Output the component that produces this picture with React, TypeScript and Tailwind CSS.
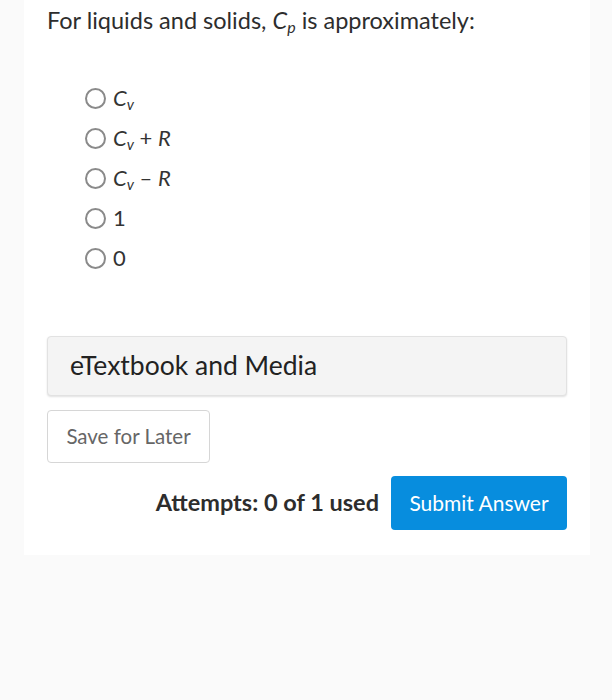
import React from 'react';

const options: React.ReactNode[] = [
  <><i>C</i><sub className="text-[15px] italic">v</sub></>,
  <><i>C</i><sub className="text-[15px] italic">v</sub> + <i>R</i></>,
  <><i>C</i><sub className="text-[15px] italic">v</sub> – <i>R</i></>,
  <>1</>,
  <>0</>,
];

export default function App() {
  return (
    <div className="min-h-[700px] bg-[#fafafa] font-['Lato','Liberation_Sans',sans-serif] text-[#2d2d2d]">
      <div className="mx-[24px] w-[566px] bg-white px-[23px] pt-[4px] pb-[25px]">
        <p className="text-[23.5px] leading-[32px]">
          For liquids and solids, <i>C</i>
          <sub className="text-[16px] italic">p</sub> is approximately:
        </p>

        <ul className="mt-[42px] ml-[38px] flex flex-col">
          {options.map((o, i) => (
            <li key={i} className="flex h-[40px] items-center gap-[7px]">
              <span className="h-[21px] w-[21px] shrink-0 rounded-full border-2 border-[#8a8a8a]" />
              <span className="text-[22px] leading-none text-[#333]">{o}</span>
            </li>
          ))}
        </ul>

        <div className="mt-[58px] flex h-[60px] items-center rounded-[4px] border border-[#e2e2e2] bg-[#f4f4f4] px-[22px] shadow-[0_1px_2px_rgba(0,0,0,0.12)]">
          <span className="text-[26.5px] text-[#222]">eTextbook and Media</span>
        </div>

        <button className="mt-[14px] flex h-[53px] w-[163px] items-center justify-center rounded-[4px] border border-[#d6d6d6] bg-white text-[20.5px] text-[#666]">
          Save for Later
        </button>

        <div className="mt-[13px] flex items-center justify-end gap-[12px]">
          <span className="text-[23.5px] font-bold text-[#2d2d2d]">Attempts: 0 of 1 used</span>
          <button className="flex h-[54px] w-[176px] items-center justify-center rounded-[4px] bg-[#078dde] text-[21px] text-white">
            Submit Answer
          </button>
        </div>
      </div>
    </div>
  );
}
